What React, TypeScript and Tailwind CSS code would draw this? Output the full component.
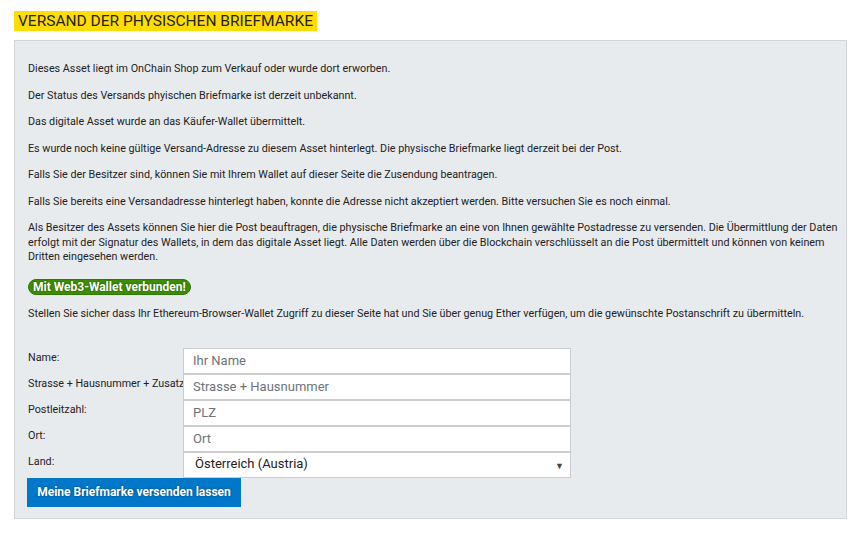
import React from "react";

const paragraphs = [
  "Dieses Asset liegt im OnChain Shop zum Verkauf oder wurde dort erworben.",
  "Der Status des Versands phyischen Briefmarke ist derzeit unbekannt.",
  "Das digitale Asset wurde an das Käufer-Wallet übermittelt.",
  "Es wurde noch keine gültige Versand-Adresse zu diesem Asset hinterlegt. Die physische Briefmarke liegt derzeit bei der Post.",
  "Falls Sie der Besitzer sind, können Sie mit Ihrem Wallet auf dieser Seite die Zusendung beantragen.",
  "Falls Sie bereits eine Versandadresse hinterlegt haben, konnte die Adresse nicht akzeptiert werden. Bitte versuchen Sie es noch einmal.",
  "Als Besitzer des Assets können Sie hier die Post beauftragen, die physische Briefmarke an eine von Ihnen gewählte Postadresse zu versenden. Die Übermittlung der Daten erfolgt mit der Signatur des Wallets, in dem das digitale Asset liegt. Alle Daten werden über die Blockchain verschlüsselt an die Post übermittelt und können von keinem Dritten eingesehen werden.",
];

const fields = [
  { label: "Name:", placeholder: "Ihr Name" },
  { label: "Strasse + Hausnummer + Zusatz", placeholder: "Strasse + Hausnummer" },
  { label: "Postleitzahl:", placeholder: "PLZ" },
  { label: "Ort:", placeholder: "Ort" },
];

const FormRow: React.FC<{ label: string; children: React.ReactNode }> = ({ label, children }) => (
  <div className="flex">
    <label className="w-[155px] shrink-0 pt-[2px] text-[10.75px] leading-[15px] whitespace-nowrap">{label}</label>
    {children}
  </div>
);

export default function App() {
  return (
    <div className="min-h-[534px] bg-white px-[14px] pt-[11px] font-['Roboto',sans-serif] text-[#222]">
      <h2 className="block w-fit bg-[#ffdd00] px-[4px] text-[15.5px] leading-[20px] font-normal uppercase">
        Versand der physischen Briefmarke
      </h2>
      <div className="mt-[9px] w-[833px] border border-[#d2d4d6] bg-[#e8ebee] pl-[13px] pr-[5px] pt-[21px] pb-[11px] text-[10.75px] leading-[14.5px]">
        {paragraphs.map((p, i) => (
          <p key={i} className="mb-[12px]">
            {p}
          </p>
        ))}
        <p className="mb-[12px] pt-[2px]">
          <span className="inline-block rounded-full border border-[#2f7a00] bg-[#3d8d07] px-[4px] text-[12px] leading-[14px] font-bold text-white [text-shadow:0_0_2px_#1d4d00]">
            Mit Web3-Wallet verbunden!
          </span>
        </p>
        <p className="mb-[26px]">
          Stellen Sie sicher dass Ihr Ethereum-Browser-Wallet Zugriff zu dieser Seite hat und Sie über genug Ether verfügen, um die gewünschte Postanschrift zu übermitteln.
        </p>
        <div className="flex flex-col">
          {fields.map((f) => (
            <FormRow key={f.label} label={f.label}>
              <input
                placeholder={f.placeholder}
                className="h-[26px] w-[388px] border border-[#cccccc] bg-white px-[9px] text-[13px] text-[#222] placeholder:text-[#6f7378] outline-none"
              />
            </FormRow>
          ))}
          <FormRow label="Land:">
            <div className="relative h-[26px] w-[388px] border border-[#cccccc] bg-white">
              <select className="h-full w-full appearance-none bg-transparent pl-[11px] text-[13px] text-[#222] outline-none">
                <option>Österreich (Austria)</option>
                <option>Deutschland (Germany)</option>
                <option>Schweiz (Switzerland)</option>
              </select>
              <span className="pointer-events-none absolute right-[6px] top-[6px] text-[9px] text-[#444]">▼</span>
            </div>
          </FormRow>
        </div>
        <button className="-ml-[1px] h-[29px] w-[214px] bg-[#0077c8] text-[12px] font-bold text-white [text-shadow:0_0_2px_#003d66]">
          Meine Briefmarke versenden lassen
        </button>
      </div>
    </div>
  );
}
